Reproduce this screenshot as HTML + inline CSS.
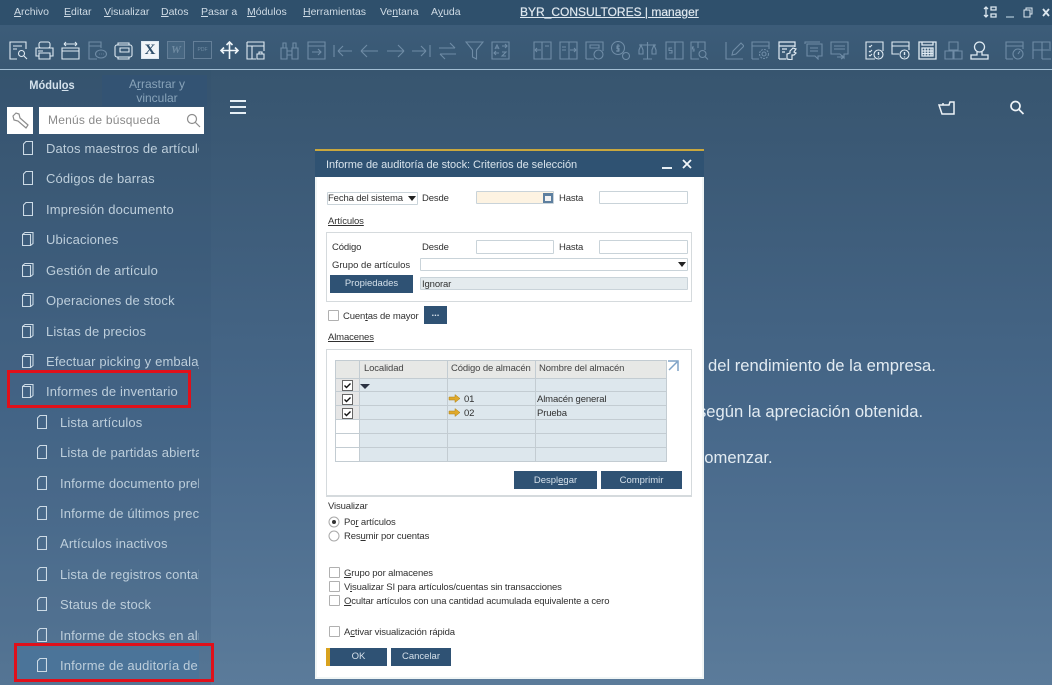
<!DOCTYPE html>
<html lang="es"><head><meta charset="utf-8"><title>SAP</title>
<style>
html,body{margin:0;padding:0}
body{width:1052px;height:685px;overflow:hidden;position:relative;font-family:"Liberation Sans",sans-serif;background:linear-gradient(180deg,#37556f 70px,#3b5975 150px,#47688a 420px,#5b7b9a 685px)}
div,span.a,svg.a{position:absolute}
u{text-decoration:underline}
.t{white-space:nowrap}
.m{top:5px;font-size:10.5px;color:#cfdbe5;height:14px;line-height:14px;white-space:nowrap}
.ic{position:absolute;top:41px;width:19px;height:19px;fill:none;stroke:#dfeaf2;stroke-width:1.1}
.d{stroke:#6f8ca6}
.it{left:0;width:199px;height:30px;line-height:30px;overflow:hidden;white-space:nowrap;font-size:13px;letter-spacing:.15px;color:#bdcedb}
.pg{position:absolute;width:10px;height:14px;top:7px;fill:none;stroke:#cddbe6;stroke-width:1.1}
.l{font-size:9.5px;letter-spacing:-.13px;color:#303030;white-space:nowrap;line-height:12px;height:12px}
.in{background:#fff;border:1px solid #c9d3d9;box-sizing:border-box;border-radius:1px}
.b{background:#2f5274;color:#d5e0ea;font-size:9.5px;text-align:center;box-sizing:border-box}
.cb{width:11px;height:11px;border:1px solid #b0b0b0;background:#fff;box-sizing:border-box;border-radius:1px}
.red{border:3px solid #e0101a;box-sizing:border-box}
.line{background:#c3ccd2}
.bg{font-size:16.6px;color:#e2ebf2;white-space:nowrap;line-height:20px}
</style></head><body>

<!-- sidebar tint -->
<div style="left:0;top:70px;width:211px;height:615px;background:rgba(50,80,110,.13)"></div>

<!-- top bar -->
<div style="left:0;top:0;width:1052px;height:25px;background:#2f506c"></div>
<div style="left:0;top:25px;width:1052px;height:44px;background:linear-gradient(180deg,#3c5c79,#395873)"></div>
<div style="left:0;top:69px;width:1052px;height:1px;background:#a2bed4"></div>

<div class="m" style="left:14px"><u>A</u>rchivo</div>
<div class="m" style="left:64px"><u>E</u>ditar</div>
<div class="m" style="left:104px"><u>V</u>isualizar</div>
<div class="m" style="left:161px"><u>D</u>atos</div>
<div class="m" style="left:201px"><u>P</u>asar a</div>
<div class="m" style="left:247px"><u>M</u>ódulos</div>
<div class="m" style="left:303px"><u>H</u>erramientas</div>
<div class="m" style="left:380px">Ve<u>n</u>tana</div>
<div class="m" style="left:431px">A<u>y</u>uda</div>
<div class="t" style="left:520px;top:4px;font-size:12px;line-height:16px;color:#dfe8ef;text-decoration:underline;-webkit-text-stroke:.2px #dfe8ef">BYR_CONSULTORES | manager</div>

<!-- window controls -->
<svg class="a" style="left:982px;top:5px" width="70" height="14" fill="none" stroke="#dce7ef" stroke-width="1.3"><path d="M4 2v10M2 4l2-2 2 2M2 10l2 2 2-2"/><path d="M9 2h5v3H9zM9 9h5v3H9z"/><path d="M24 12h8" stroke-width="1.4" stroke="#9fb6c8"/><path d="M42 5h6v7h-6zM44 5V3h6v6h-2" stroke-width="1"/><path d="M61 4l6 7M67 4l-6 7" stroke-width="1.8"/></svg>

<!-- toolbar left -->
<svg class="ic" style="left:9px" viewBox="0 0 19 19"><path d="M17 8V1H1v17h7M4 5h9M4 8h4"/><circle cx="12.500" cy="12.500" r="3"/><path d="M15 15l3 3"/></svg>
<svg class="ic" style="left:35px" viewBox="0 0 19 19"><rect x="4" y="1" width="11" height="6" rx="2"/><path d="M4 15H1V7h17v8h-3M4 12h11v6H4zM3 10h5"/></svg>
<svg class="ic" style="left:61px" viewBox="0 0 19 19"><path d="M1 7h17v11H1zM1 10h17M3 3h13M3 3l2-2M3 3l2 2M16 3l-2-2M16 3l-2 2"/></svg>
<svg class="ic d" style="left:88px" viewBox="0 0 19 19"><path d="M13 7V1H1v17h8M1 5h12"/><ellipse cx="13" cy="13" rx="5.500" ry="4"/><path d="M11 13h.6M13 13h.6M15 13h.6"/></svg>
<svg class="ic" style="left:114px" viewBox="0 0 19 19"><rect x="1" y="4" width="17" height="12" rx="2"/><path d="M4 4V2h11v2M4 16v2h11v-2M6 7h9v4H6z"/></svg>
<div style="left:141px;top:41px;width:18px;height:18px;box-sizing:border-box;border:1px solid #dfeaf2;background:#f1f5f8;color:#2f506c;font:bold 15px/16px 'Liberation Serif',serif;text-align:center">X</div>
<div style="left:167px;top:41px;width:18px;height:18px;box-sizing:border-box;border:1px solid #647f98;background:#466681;color:#6f8ba2;font:bold italic 11px/16px 'Liberation Serif',serif;text-align:center">W</div>
<div style="left:193px;top:41px;width:19px;height:18px;box-sizing:border-box;border:1px solid #647f98;color:#6f8ba2;font:5px/16px 'Liberation Sans',sans-serif;text-align:center">PDF</div>
<svg class="ic" style="left:220px;stroke-width:1.6;stroke:#eef4f8" viewBox="0 0 19 19"><path d="M9.500 1v17M1 9.500h17M6.500 4l3-3 3 3M4 6.500l-3 3 3 3M15 6.500l3 3-3 3"/></svg>
<svg class="ic" style="left:246px" viewBox="0 0 19 19"><path d="M1 1h17v9M1 1v17h9M1 5h17M6 5v13"/><path d="M11 13h7v5h-7zM13 13v-2h3v2"/></svg>

<!-- disabled group -->
<svg class="ic d" style="left:280px" viewBox="0 0 19 19"><path d="M1 7h6v11H1zM12 7h6v11h-6zM7 10h5M7 14h5M3 7V2h3v5M13 7V2h3v5"/></svg>
<svg class="ic d" style="left:307px" viewBox="0 0 19 19"><path d="M1 1h17v17H1zM1 5h17M5 11h9M11 8l3 3-3 3"/></svg>
<svg class="ic d" style="left:333px" viewBox="0 0 19 19"><path d="M1 4v12M5 10h14M5 10l5-5M5 10l5 5"/></svg>
<svg class="ic d" style="left:360px" viewBox="0 0 19 19"><path d="M1 10h17M1 10l6-6M1 10l6 6"/></svg>
<svg class="ic d" style="left:386px" viewBox="0 0 19 19"><path d="M1 10h17M18 10l-6-6M18 10l-6 6"/></svg>
<svg class="ic d" style="left:412px" viewBox="0 0 19 19"><path d="M0 10h14M14 10l-5-5M14 10l-5 5M18 4v12"/></svg>
<svg class="ic d" style="left:438px" viewBox="0 0 19 19"><path d="M1 7h16M17 7l-5-5M18 13H2M2 13l5 5"/></svg>
<svg class="ic d" style="left:465px" viewBox="0 0 19 19"><path d="M1 1h17l-6.500 8v9l-4-2V9z"/></svg>
<svg class="ic d" style="left:491px" viewBox="0 0 19 19"><path d="M1 1h17v17H1zM4 8l2-4 2 4M5 7h2M11 5h5M14 3l2 2-2 2M8 12H3M5 10l-2 2 2 2M11 11h4l-4 4h4"/></svg>
<svg class="ic d" style="left:533px" viewBox="0 0 19 19"><path d="M1 1h17v17H1zM9 1v17M2 9h6M2 9l2-2M2 9l2 2M12 5h4"/></svg>
<svg class="ic d" style="left:559px" viewBox="0 0 19 19"><path d="M1 1h17v17H1zM10 1v17M3 6h4M3 9h4M11 9h6M17 9l-2-2M17 9l-2 2"/></svg>
<svg class="ic d" style="left:585px" viewBox="0 0 19 19"><path d="M1 18V1h17v9M1 18h8M5 4h9v3H5z"/><circle cx="13.500" cy="13.500" r="4.500"/></svg>
<svg class="ic d" style="left:611px" viewBox="0 0 19 19"><circle cx="7" cy="7" r="6.500"/><circle cx="15" cy="15" r="3.500"/><path d="M9 5H6v2.500h2V10H5M7 3v8"/></svg>
<svg class="ic d" style="left:638px" viewBox="0 0 19 19"><path d="M9.500 1v17M5 18h9M1 4h17M1 9l2-5 2 5v4H1zM14 9l2-5 2 5v4h-4z"/></svg>
<svg class="ic d" style="left:665px" viewBox="0 0 19 19"><path d="M1 1h17v17H1zM10 1v17M7 7H4v2.500h3V12H4"/></svg>
<svg class="ic d" style="left:690px" viewBox="0 0 19 19"><path d="M15 9V1H1v17h8M8 1v6M4 6H2.500v2H4v2H2.500"/><circle cx="12.500" cy="13" r="3.500"/><path d="M15 15.500l3 3"/></svg>
<svg class="ic d" style="left:725px" viewBox="0 0 19 19"><path d="M1 1v17h17M7 14l1-4 8-8 3 3-8 8z"/></svg>
<svg class="ic d" style="left:751px" viewBox="0 0 19 19"><path d="M1 18V1h17v7M1 18h7M1 5h17"/><circle cx="13" cy="13" r="4.500" stroke-dasharray="2 1"/><circle cx="13" cy="13" r="2"/></svg>
<svg class="ic" style="left:778px;stroke-width:1.2" viewBox="0 0 19 19"><path d="M1 18V1h16v5M1 5h16M4 8h5M4 11h3M1 18h7M9 18v-5l3-1v-2l3-3 3 1-2 3 2 1-2 2h-2v5z"/></svg>
<svg class="ic d" style="left:804px" viewBox="0 0 19 19"><path d="M1 3V1h15M18 3v12h-4v3l-3-3H3V3zM6 7h8M6 10h8"/></svg>
<svg class="ic d" style="left:830px" viewBox="0 0 19 19"><path d="M1 1h17v12h-4v4l-4-4H1zM4 5h11M4 8h11M7 16h7M11 14l3 2-3 2"/></svg>
<svg class="ic" style="left:865px" viewBox="0 0 19 19"><path d="M10 18H1V1h17v9M4 5l1 1 2-2M4 10l1 1 2-2M4 14l1 1 2-2"/><circle cx="13.500" cy="13.500" r="4.500"/><path d="M13.500 11v3M13.500 15.500v1" stroke-width="1.400"/></svg>
<svg class="ic" style="left:891px" viewBox="0 0 19 19"><path d="M18 9V1H1v12h7M1 5h17"/><circle cx="13.500" cy="13.500" r="4.500"/><path d="M13.500 11v3M13.500 15.500v1" stroke-width="1.400"/></svg>
<svg class="ic" style="left:918px;stroke-width:1.3" viewBox="0 0 19 19"><path d="M1 1h17v17H1zM4 1v3h11V1M4 7h11v8H4zM4 10h11M4 12.500h11M7 7v8M10 7v8M13 7v8"/></svg>
<svg class="ic d" style="left:944px" viewBox="0 0 19 19"><path d="M5 1h9v8H5zM1 10h8v8H1zM10 10h8v8h-8z"/></svg>
<svg class="ic" style="left:970px;stroke-width:1.3" viewBox="0 0 19 19"><circle cx="9.500" cy="6" r="5"/><path d="M7 11v3H1v4h17v-4h-6v-3"/></svg>
<svg class="ic d" style="left:1005px" viewBox="0 0 19 19"><path d="M1 18V1h17v7M1 18h7M1 5h17"/><circle cx="13" cy="13" r="5"/><path d="M13 13l2-3"/></svg>
<svg class="ic d" style="left:1032px" viewBox="0 0 19 19"><path d="M1 18V1h17v7M10 1v17M1 9h18M10 18h9"/></svg>

<!-- tabs -->
<div style="left:102px;top:75px;width:105px;height:31px;background:#335373"></div>
<div class="t" style="left:0;top:78px;width:104px;text-align:center;font-size:12px;line-height:14px;font-weight:bold;color:#d5e2ec;transform:scaleX(.92)">Módul<u>o</u>s</div>
<div style="left:105px;top:78px;width:104px;text-align:center;font-size:12px;line-height:13.500px;color:#88a3b9">A<u>r</u>rastrar y<br>vincular</div>

<!-- search -->
<div style="left:7px;top:107px;width:26px;height:27px;background:#fff"></div>
<svg class="a" style="left:12px;top:112px" width="17" height="17" fill="none" stroke="#8c8c8c" stroke-width="1.2"><path d="M1 4l3-3 3 1 1 4 8 7-2 3-8-7-4-1z"/></svg>
<div style="left:39px;top:107px;width:165px;height:27px;background:#fff"></div>
<div class="t" style="left:48px;top:113px;font-size:12px;line-height:15px;color:#8a8a8a;letter-spacing:.2px">Menús de búsqueda</div>
<svg class="a" style="left:186px;top:113px" width="15" height="15" fill="none" stroke="#8c8c8c" stroke-width="1.2"><circle cx="6" cy="6" r="4.500"/><path d="M9.500 9.500l4.500 4.500"/></svg>

<!-- sidebar -->
<div style="left:20px;top:650px;width:179px;height:30px;background:#4b7499"></div>

<div class="it" style="top:134px;padding-left:46px;width:153px">Datos maestros de artículos<svg class="pg" style="left:23px"><path d="M3 .5h6.500v13H.5V3z"/></svg></div>
<div class="it" style="top:164px;padding-left:46px;width:153px">Códigos de barras<svg class="pg" style="left:23px"><path d="M3 .5h6.500v13H.5V3z"/></svg></div>
<div class="it" style="top:195px;padding-left:46px;width:153px">Impresión documento<svg class="pg" style="left:23px"><path d="M3 .5h6.500v13H.5V3z"/></svg></div>
<div class="it" style="top:225px;padding-left:46px;width:153px">Ubicaciones<svg class="pg" style="left:22px;width:12px"><path d="M.5 2.500h8v11h-8zM.5 2.500L3 .5h8v11l-2.500 2"/></svg></div>
<div class="it" style="top:256px;padding-left:46px;width:153px">Gestión de artículo<svg class="pg" style="left:22px;width:12px"><path d="M.5 2.500h8v11h-8zM.5 2.500L3 .5h8v11l-2.500 2"/></svg></div>
<div class="it" style="top:286px;padding-left:46px;width:153px">Operaciones de stock<svg class="pg" style="left:22px;width:12px"><path d="M.5 2.500h8v11h-8zM.5 2.500L3 .5h8v11l-2.500 2"/></svg></div>
<div class="it" style="top:317px;padding-left:46px;width:153px">Listas de precios<svg class="pg" style="left:22px;width:12px"><path d="M.5 2.500h8v11h-8zM.5 2.500L3 .5h8v11l-2.500 2"/></svg></div>
<div class="it" style="top:347px;padding-left:46px;width:153px">Efectuar picking y embalaje<svg class="pg" style="left:22px;width:12px"><path d="M.5 2.500h8v11h-8zM.5 2.500L3 .5h8v11l-2.500 2"/></svg></div>
<div class="it" style="top:377px;padding-left:46px;width:153px">Informes de inventario<svg class="pg" style="left:22px;width:12px"><path d="M.5 2.500h8v11h-8zM.5 2.500L3 .5h8v11l-2.500 2"/></svg></div>

<div class="it" style="top:408px;padding-left:60px;width:139px">Lista artículos<svg class="pg" style="left:37px"><path d="M3 .5h6.500v13H.5V3z"/></svg></div>
<div class="it" style="top:438px;padding-left:60px;width:139px">Lista de partidas abiertas<svg class="pg" style="left:37px"><path d="M3 .5h6.500v13H.5V3z"/></svg></div>
<div class="it" style="top:469px;padding-left:60px;width:139px">Informe documento preliminar<svg class="pg" style="left:37px"><path d="M3 .5h6.500v13H.5V3z"/></svg></div>
<div class="it" style="top:499px;padding-left:60px;width:139px">Informe de últimos precios<svg class="pg" style="left:37px"><path d="M3 .5h6.500v13H.5V3z"/></svg></div>
<div class="it" style="top:529px;padding-left:60px;width:139px">Artículos inactivos<svg class="pg" style="left:37px"><path d="M3 .5h6.500v13H.5V3z"/></svg></div>
<div class="it" style="top:560px;padding-left:60px;width:139px">Lista de registros contables<svg class="pg" style="left:37px"><path d="M3 .5h6.500v13H.5V3z"/></svg></div>
<div class="it" style="top:590px;padding-left:60px;width:139px">Status de stock<svg class="pg" style="left:37px"><path d="M3 .5h6.500v13H.5V3z"/></svg></div>
<div class="it" style="top:621px;padding-left:60px;width:139px">Informe de stocks en almacén<svg class="pg" style="left:37px"><path d="M3 .5h6.500v13H.5V3z"/></svg></div>
<div class="it" style="top:651px;padding-left:60px;width:139px">Informe de auditoría de stock<svg class="pg" style="left:37px"><path d="M3 .5h6.500v13H.5V3z"/></svg></div>

<div class="red" style="left:7px;top:370px;width:184px;height:38px"></div>
<div class="red" style="left:14px;top:643px;width:200px;height:39px"></div>

<!-- main header icons -->
<div style="left:230px;top:100px;width:16px;height:2px;background:#e6eff5"></div>
<div style="left:230px;top:106px;width:16px;height:2px;background:#e6eff5"></div>
<div style="left:230px;top:112px;width:16px;height:2px;background:#e6eff5"></div>
<svg class="a" style="left:938px;top:101px" width="17" height="14" fill="none" stroke="#eef3f7" stroke-width="1.5"><path d="M1 4h10l1-3h4v12H4z"/><path d="M5 4V2"/></svg>
<svg class="a" style="left:1009px;top:100px" width="16" height="15" fill="none" stroke="#eef3f7" stroke-width="1.7"><circle cx="6.500" cy="6" r="4.500"/><path d="M10 9.500l4.500 4.500"/></svg>

<!-- background text -->
<div class="bg" style="left:708px;top:356px">del rendimiento de la empresa.</div>
<div class="bg" style="left:698px;top:402px">según la apreciación obtenida.</div>
<div class="bg" style="left:696px;top:448px">comenzar.</div>

<!-- dialog -->
<div style="left:315px;top:150px;width:389px;height:529px;background:#fff;box-sizing:border-box;border:2px solid #f0f5f5;border-top:0"></div>
<div style="left:315px;top:149px;width:389px;height:2px;background:#c8a73e"></div>
<div style="left:315px;top:151px;width:389px;height:26px;background:#2f5272"></div>
<div class="t" style="left:326px;top:158px;font-size:11px;line-height:15px;color:#d9e4ec;letter-spacing:-.05px">Informe de auditoría de stock: Criterios de selección</div>
<div style="left:662px;top:167px;width:10px;height:2px;background:#e6eef4"></div>
<svg class="a" style="left:682px;top:159px" width="11" height="11" fill="none" stroke="#f2f6f9" stroke-width="1.800"><path d="M1 1l8 8M9 1L1 9"/></svg>

<div class="in" style="left:327px;top:192px;width:91px;height:13px"></div>
<div class="l" style="left:328px;top:193px">Fecha del sistema</div>
<div class="a" style="left:408px;top:196px;width:0;height:0;border:4px solid transparent;border-top:5px solid #222;border-bottom:0"></div>
<div class="l" style="left:422px;top:193px">Desde</div>
<div class="in" style="left:476px;top:191px;width:78px;height:13px;background:#fdf3e2"></div>
<div style="left:543px;top:193px;width:10px;height:10px;background:#5d7f9f"></div>
<div style="left:545px;top:196px;width:6px;height:5px;background:#f2f2f2"></div>
<div class="l" style="left:559px;top:193px">Hasta</div>
<div class="in" style="left:599px;top:191px;width:89px;height:13px"></div>

<div class="l" style="left:328px;top:216px"><u>Artículos</u></div>
<div style="left:326px;top:232px;width:366px;height:70px;box-sizing:border-box;border:1px solid #d5dadd"></div>
<div class="l" style="left:332px;top:242px">Código</div>
<div class="l" style="left:422px;top:242px">Desde</div>
<div class="in" style="left:476px;top:240px;width:78px;height:14px"></div>
<div class="l" style="left:559px;top:242px">Hasta</div>
<div class="in" style="left:599px;top:240px;width:89px;height:14px"></div>
<div class="l" style="left:332px;top:260px;letter-spacing:0">Grupo de artículos</div>
<div class="in" style="left:420px;top:258px;width:268px;height:13px"></div>
<div class="a" style="left:678px;top:262px;width:0;height:0;border:4px solid transparent;border-top:5px solid #222;border-bottom:0"></div>
<div class="b" style="left:330px;top:275px;width:83px;height:18px;line-height:18px">Propiedades</div>
<div class="in" style="left:420px;top:277px;width:268px;height:13px;background:#e4ebee"></div>
<div class="l" style="left:422px;top:279px">Ignorar</div>

<div class="cb" style="left:328px;top:310px"></div>
<div class="l" style="left:343px;top:311px">Cuen<u>t</u>as de mayor</div>
<div class="b" style="left:424px;top:306px;width:23px;height:18px;line-height:16px;font-weight:bold">...</div>

<div class="l" style="left:328px;top:332px"><u>Almacenes</u></div>
<div style="left:326px;top:349px;width:366px;height:148px;box-sizing:border-box;border:1px solid #d5dadd;border-bottom-width:2px"></div>

<!-- table -->
<div style="left:335px;top:360px;width:332px;height:18px;background:#e7e8e6"></div>
<div style="left:359px;top:378px;width:308px;height:83px;background:#dde7ed"></div>
<div style="left:335px;top:378px;width:24px;height:41px;background:#e6e6e6"></div>
<div class="line" style="left:335px;top:360px;width:332px;height:1px"></div>
<div class="line" style="left:335px;top:378px;width:332px;height:1px"></div>
<div class="line" style="left:335px;top:391px;width:332px;height:1px"></div>
<div class="line" style="left:335px;top:405px;width:332px;height:1px"></div>
<div class="line" style="left:335px;top:419px;width:332px;height:1px"></div>
<div class="line" style="left:335px;top:433px;width:332px;height:1px"></div>
<div class="line" style="left:335px;top:447px;width:332px;height:1px"></div>
<div class="line" style="left:335px;top:461px;width:332px;height:1px"></div>
<div class="line" style="left:335px;top:360px;width:1px;height:102px"></div>
<div class="line" style="left:359px;top:360px;width:1px;height:102px"></div>
<div class="line" style="left:447px;top:360px;width:1px;height:102px"></div>
<div class="line" style="left:535px;top:360px;width:1px;height:102px"></div>
<div class="line" style="left:666px;top:360px;width:1px;height:102px"></div>
<div class="l" style="left:364px;top:363px;color:#444">Localidad</div>
<div class="l" style="left:451px;top:363px;color:#444">Código de almacén</div>
<div class="l" style="left:539px;top:363px;color:#444">Nombre del almacén</div>
<svg class="a" style="left:667px;top:360px" width="12" height="12" fill="none" stroke="#7ea2c6" stroke-width="1.500"><path d="M1 1h10v10M10 2L2 10"/></svg>

<svg class="a" style="left:342px;top:380px" width="11" height="39" fill="#fff" stroke="#666" stroke-width="1"><rect x=".5" y=".5" width="10" height="10"/><rect x=".5" y="14.500" width="10" height="10"/><rect x=".5" y="28.500" width="10" height="10"/><path fill="none" stroke="#111" stroke-width="1.400" d="M2.500 5.500l2 2 4-4M2.500 19.500l2 2 4-4M2.500 33.500l2 2 4-4"/></svg>
<div class="a" style="left:360px;top:384px;width:0;height:0;border:5px solid transparent;border-top:5px solid #2b3242;border-bottom:0"></div>
<svg class="a" style="left:448px;top:394px" width="13" height="26" fill="#e0a92a" stroke="#a87f18" stroke-width=".5"><path d="M1 3h6V.5L12 4.500 7 8.500V6H1zM1 17h6v-2.500L12 18.500l-5 4V20H1z"/></svg>
<div class="l" style="left:464px;top:394px">01</div>
<div class="l" style="left:537px;top:394px">Almacén general</div>
<div class="l" style="left:464px;top:408px">02</div>
<div class="l" style="left:537px;top:408px">Prueba</div>

<div class="b" style="left:514px;top:471px;width:83px;height:18px;line-height:19px">Despl<u>e</u>gar</div>
<div class="b" style="left:601px;top:471px;width:81px;height:18px;line-height:19px">Comprimir</div>

<div class="l" style="left:328px;top:501px">Visualizar</div>
<svg class="a" style="left:328px;top:516px" width="12" height="26" fill="#fff" stroke="#a8a8a8"><circle cx="6" cy="6" r="5"/><circle cx="6" cy="20" r="5"/><circle cx="6" cy="6" r="2" fill="#333" stroke="none"/></svg>
<div class="l" style="left:344px;top:517px">Po<u>r</u> artículos</div>
<div class="l" style="left:344px;top:531px">Res<u>u</u>mir por cuentas</div>

<div class="cb" style="left:329px;top:567px"></div>
<div class="l" style="left:344px;top:568px"><u>G</u>rupo por almacenes</div>
<div class="cb" style="left:329px;top:581px"></div>
<div class="l" style="left:344px;top:582px">V<u>i</u>sualizar SI para artículos/cuentas sin transacciones</div>
<div class="cb" style="left:329px;top:595px"></div>
<div class="l" style="left:344px;top:596px"><u>O</u>cultar artículos con una cantidad acumulada equivalente a cero</div>
<div class="cb" style="left:329px;top:626px"></div>
<div class="l" style="left:344px;top:627px">A<u>c</u>tivar visualización rápida</div>

<div class="b" style="left:326px;top:648px;width:61px;height:18px;line-height:18px;border-left:4px solid #d8a21e">OK</div>
<div class="b" style="left:391px;top:648px;width:60px;height:18px;line-height:18px">Cancelar</div>

</body></html>
